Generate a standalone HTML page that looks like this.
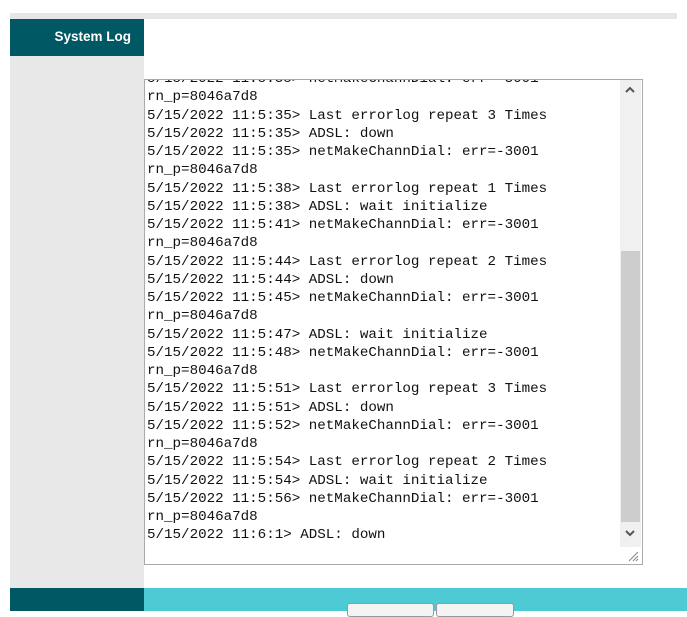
<!DOCTYPE html><html><head><style>
body{margin:0;width:687px;height:611px;background:#fff;position:relative;overflow:hidden;font-family:"Liberation Sans",sans-serif}
div{position:absolute}
pre{margin:0;font-family:"Liberation Mono",monospace;font-size:14.2px;line-height:18.25px;color:#111;letter-spacing:0px}
</style></head><body>
<div style="left:10px;top:13px;width:667px;height:6px;background:#e6e6e6"></div>
<div style="left:10px;top:19px;width:134px;height:569px;background:#e8e8e8"></div>
<div style="left:10px;top:19px;width:134px;height:37px;background:#005865"></div>
<div style="left:10px;top:29px;width:121px;text-align:right;color:#fff;font-weight:bold;font-size:13.5px">System Log</div>
<div style="left:144px;top:79px;width:497px;height:484px;border:1px solid #aaa;background:#fff;overflow:hidden">
<div style="left:2px;top:-10px"><pre>5/15/2022 11:5:35> netMakeChannDial: err=-3001
rn_p=8046a7d8
5/15/2022 11:5:35> Last errorlog repeat 3 Times
5/15/2022 11:5:35> ADSL: down
5/15/2022 11:5:35> netMakeChannDial: err=-3001
rn_p=8046a7d8
5/15/2022 11:5:38> Last errorlog repeat 1 Times
5/15/2022 11:5:38> ADSL: wait initialize
5/15/2022 11:5:41> netMakeChannDial: err=-3001
rn_p=8046a7d8
5/15/2022 11:5:44> Last errorlog repeat 2 Times
5/15/2022 11:5:44> ADSL: down
5/15/2022 11:5:45> netMakeChannDial: err=-3001
rn_p=8046a7d8
5/15/2022 11:5:47> ADSL: wait initialize
5/15/2022 11:5:48> netMakeChannDial: err=-3001
rn_p=8046a7d8
5/15/2022 11:5:51> Last errorlog repeat 3 Times
5/15/2022 11:5:51> ADSL: down
5/15/2022 11:5:52> netMakeChannDial: err=-3001
rn_p=8046a7d8
5/15/2022 11:5:54> Last errorlog repeat 2 Times
5/15/2022 11:5:54> ADSL: wait initialize
5/15/2022 11:5:56> netMakeChannDial: err=-3001
rn_p=8046a7d8
5/15/2022 11:6:1> ADSL: down</pre></div>
<div style="left:475px;top:0;width:21px;height:467px;background:#f0f0f0"></div>
<div style="left:476px;top:171px;width:19px;height:271px;background:#cdcdcd"></div>
<svg style="position:absolute;left:478px;top:4px" width="14" height="12"><path d="M3 8L7 4L11 8" stroke="#555" stroke-width="2" fill="none"/></svg>
<svg style="position:absolute;left:478px;top:447px" width="14" height="12"><path d="M3 4L7 8L11 4" stroke="#555" stroke-width="2" fill="none"/></svg>
<svg style="position:absolute;left:480px;top:468px" width="15" height="15"><path d="M13 4L4 13M13 8L8 13M13 11L11 13" stroke="#888" stroke-width="1"/></svg>
</div>
<div style="left:10px;top:588px;width:134px;height:23px;background:#005865"></div>
<div style="left:144px;top:588px;width:543px;height:23px;background:#4ecad5"></div>
<div style="left:347px;top:603px;width:85px;height:12px;background:#f4f4f4;border:1px solid #999;border-radius:3px"></div>
<div style="left:436px;top:603px;width:76px;height:12px;background:#f4f4f4;border:1px solid #999;border-radius:3px"></div>
</body></html>
